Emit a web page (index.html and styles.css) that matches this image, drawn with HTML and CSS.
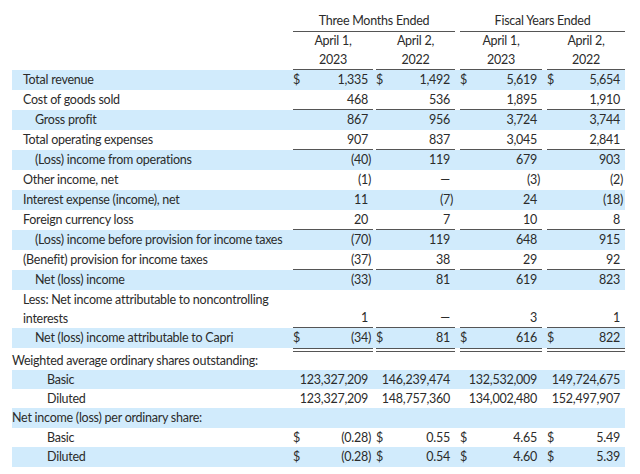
FILE: index.html
```html
<!DOCTYPE html>
<html lang="en">
<head>
<meta charset="utf-8">
<title>Consolidated Statements of Operations</title>
<link rel="stylesheet" href="styles.css">
</head>
<body>
<div class="stmt">
  <div class="hrow top">
    <div class="lbl"></div>
    <div class="grp g1">Three Months Ended</div>
    <div class="grp g2">Fiscal Years Ended</div>
  </div>
  <div class="hrow sub">
    <div class="lbl"></div>
    <div class="hc ca">April 1,<br>2023</div>
    <div class="hc cb">April 2,<br>2022</div>
    <div class="hc cc">April 1,<br>2023</div>
    <div class="hc cd">April 2,<br>2022</div>
  </div>

  <div class="row blue">
    <div class="lbl">Total revenue</div>
    <div class="v ca"><span>$</span><span class="n">1,335<i></i></span></div>
    <div class="v cb"><span>$</span><span class="n">1,492<i></i></span></div>
    <div class="v cc"><span>$</span><span class="n">5,619<i></i></span></div>
    <div class="v cd"><span>$</span><span class="n">5,654<i></i></span></div>
  </div>
  <div class="row line">
    <div class="lbl">Cost of goods sold</div>
    <div class="v ca"><span class="n">468<i></i></span></div>
    <div class="v cb"><span class="n">536<i></i></span></div>
    <div class="v cc"><span class="n">1,895<i></i></span></div>
    <div class="v cd"><span class="n">1,910<i></i></span></div>
  </div>
  <div class="row blue">
    <div class="lbl i1">Gross profit</div>
    <div class="v ca"><span class="n">867<i></i></span></div>
    <div class="v cb"><span class="n">956<i></i></span></div>
    <div class="v cc"><span class="n">3,724<i></i></span></div>
    <div class="v cd"><span class="n">3,744<i></i></span></div>
  </div>
  <div class="row line">
    <div class="lbl">Total operating expenses</div>
    <div class="v ca"><span class="n">907<i></i></span></div>
    <div class="v cb"><span class="n">837<i></i></span></div>
    <div class="v cc"><span class="n">3,045<i></i></span></div>
    <div class="v cd"><span class="n">2,841<i></i></span></div>
  </div>
  <div class="row blue">
    <div class="lbl i1">(Loss) income from operations</div>
    <div class="v ca"><span class="n">(40<i>)</i></span></div>
    <div class="v cb"><span class="n">119<i></i></span></div>
    <div class="v cc"><span class="n">679<i></i></span></div>
    <div class="v cd"><span class="n">903<i></i></span></div>
  </div>
  <div class="row">
    <div class="lbl">Other income, net</div>
    <div class="v ca"><span class="n">(1<i>)</i></span></div>
    <div class="v cb"><span class="n">—<i></i></span></div>
    <div class="v cc"><span class="n">(3<i>)</i></span></div>
    <div class="v cd"><span class="n">(2<i>)</i></span></div>
  </div>
  <div class="row blue">
    <div class="lbl">Interest expense (income), net</div>
    <div class="v ca"><span class="n">11<i></i></span></div>
    <div class="v cb"><span class="n">(7<i>)</i></span></div>
    <div class="v cc"><span class="n">24<i></i></span></div>
    <div class="v cd"><span class="n">(18<i>)</i></span></div>
  </div>
  <div class="row line">
    <div class="lbl">Foreign currency loss</div>
    <div class="v ca"><span class="n">20<i></i></span></div>
    <div class="v cb"><span class="n">7<i></i></span></div>
    <div class="v cc"><span class="n">10<i></i></span></div>
    <div class="v cd"><span class="n">8<i></i></span></div>
  </div>
  <div class="row blue">
    <div class="lbl i1">(Loss) income before provision for income taxes</div>
    <div class="v ca"><span class="n">(70<i>)</i></span></div>
    <div class="v cb"><span class="n">119<i></i></span></div>
    <div class="v cc"><span class="n">648<i></i></span></div>
    <div class="v cd"><span class="n">915<i></i></span></div>
  </div>
  <div class="row line">
    <div class="lbl">(Benefit) provision for income taxes</div>
    <div class="v ca"><span class="n">(37<i>)</i></span></div>
    <div class="v cb"><span class="n">38<i></i></span></div>
    <div class="v cc"><span class="n">29<i></i></span></div>
    <div class="v cd"><span class="n">92<i></i></span></div>
  </div>
  <div class="row blue">
    <div class="lbl i1">Net (loss) income</div>
    <div class="v ca"><span class="n">(33<i>)</i></span></div>
    <div class="v cb"><span class="n">81<i></i></span></div>
    <div class="v cc"><span class="n">619<i></i></span></div>
    <div class="v cd"><span class="n">823<i></i></span></div>
  </div>
  <div class="row line tall">
    <div class="lbl">Less: Net income attributable to noncontrolling<br>interests</div>
    <div class="v ca"><span class="n">1<i></i></span></div>
    <div class="v cb"><span class="n">—<i></i></span></div>
    <div class="v cc"><span class="n">3<i></i></span></div>
    <div class="v cd"><span class="n">1<i></i></span></div>
  </div>
  <div class="row blue dbl">
    <div class="lbl i1">Net (loss) income attributable to Capri</div>
    <div class="v ca"><span>$</span><span class="n">(34<i>)</i></span></div>
    <div class="v cb"><span>$</span><span class="n">81<i></i></span></div>
    <div class="v cc"><span>$</span><span class="n">616<i></i></span></div>
    <div class="v cd"><span>$</span><span class="n">822<i></i></span></div>
  </div>

  <div class="row sm first">
    <div class="lbl i0 wide">Weighted average ordinary shares outstanding:</div>
  </div>
  <div class="row sm blue">
    <div class="lbl i2">Basic</div>
    <div class="v ca"><span class="n">123,327,209<i></i></span></div>
    <div class="v cb"><span class="n">146,239,474<i></i></span></div>
    <div class="v cc"><span class="n">132,532,009<i></i></span></div>
    <div class="v cd"><span class="n">149,724,675<i></i></span></div>
  </div>
  <div class="row sm">
    <div class="lbl i2">Diluted</div>
    <div class="v ca"><span class="n">123,327,209<i></i></span></div>
    <div class="v cb"><span class="n">148,757,360<i></i></span></div>
    <div class="v cc"><span class="n">134,002,480<i></i></span></div>
    <div class="v cd"><span class="n">152,497,907<i></i></span></div>
  </div>
  <div class="row blue">
    <div class="lbl i0 wide">Net income (loss) per ordinary share:</div>
  </div>
  <div class="row sm">
    <div class="lbl i2">Basic</div>
    <div class="v ca"><span>$</span><span class="n">(0.28<i>)</i></span></div>
    <div class="v cb"><span>$</span><span class="n">0.55<i></i></span></div>
    <div class="v cc"><span>$</span><span class="n">4.65<i></i></span></div>
    <div class="v cd"><span>$</span><span class="n">5.49<i></i></span></div>
  </div>
  <div class="row blue">
    <div class="lbl i2">Diluted</div>
    <div class="v ca"><span>$</span><span class="n">(0.28<i>)</i></span></div>
    <div class="v cb"><span>$</span><span class="n">0.54<i></i></span></div>
    <div class="v cc"><span>$</span><span class="n">4.60<i></i></span></div>
    <div class="v cd"><span>$</span><span class="n">5.39<i></i></span></div>
  </div>
</div>
</body>
</html>
```

FILE: styles.css
```css
* { box-sizing: border-box; }

body {
  margin: 0;
  background: #ffffff;
  font-family: Lato, "Liberation Sans", sans-serif;
  font-size: 12.5px;
  letter-spacing: -0.25px;
  color: #2b2b2b;
}

.stmt {
  width: 613px;
  margin: 10px 0 0 12px;
}

.hrow, .row {
  display: flex;
}

.lbl {
  width: 281px;
  flex: none;
  padding-left: 11px;
  white-space: nowrap;
}
.lbl.i0 { padding-left: 0; }
.lbl.i1 { padding-left: 23px; }
.lbl.i2 { padding-left: 35px; }
.lbl.wide { width: 100%; }

.ca { width: 80px; flex: none; }
.cb { width: 79px; flex: none; margin-left: 3px; }
.cc { width: 82px; flex: none; margin-left: 5px; }
.cd { width: 78px; flex: none; margin-left: 5px; }

/* header */
.hrow.top {
  height: 22px;
  line-height: 21px;
}
.grp {
  text-align: center;
  border-bottom: 1px solid #555555;
}
.g1 { width: 162px; }
.g2 { width: 165px; margin-left: 5px; }

.hrow.sub {
  height: 38px;
  line-height: 18.5px;
}
.hc {
  text-align: center;
  border-bottom: 1px solid #555555;
}

/* data rows */
.row {
  height: 20px;
  line-height: 20px;
}
.row.sm {
  height: 19px;
  line-height: 19px;
}
.row.first { height: 18px; line-height: 18px; }
.row.blue { background: #d1ebfc; }

.row.tall {
  height: 38px;
  line-height: 19px;
  align-items: flex-end;
}

.v {
  display: flex;
  justify-content: space-between;
  white-space: nowrap;
}
.v .n {
  margin-left: auto;
}
.v i {
  display: inline-block;
  width: 5px;
  font-style: normal;
  text-align: left;
}

.row.line .v { border-bottom: 1px solid #555555; }
.row.dbl { height: 24px; }
.row.dbl .v { border-bottom: 4px double #555555; height: 24px; }
.row.dbl .lbl { height: 20px; }
.row.dbl { background: linear-gradient(#d1ebfc, #d1ebfc) no-repeat; background-size: 100% 20px; }
```
